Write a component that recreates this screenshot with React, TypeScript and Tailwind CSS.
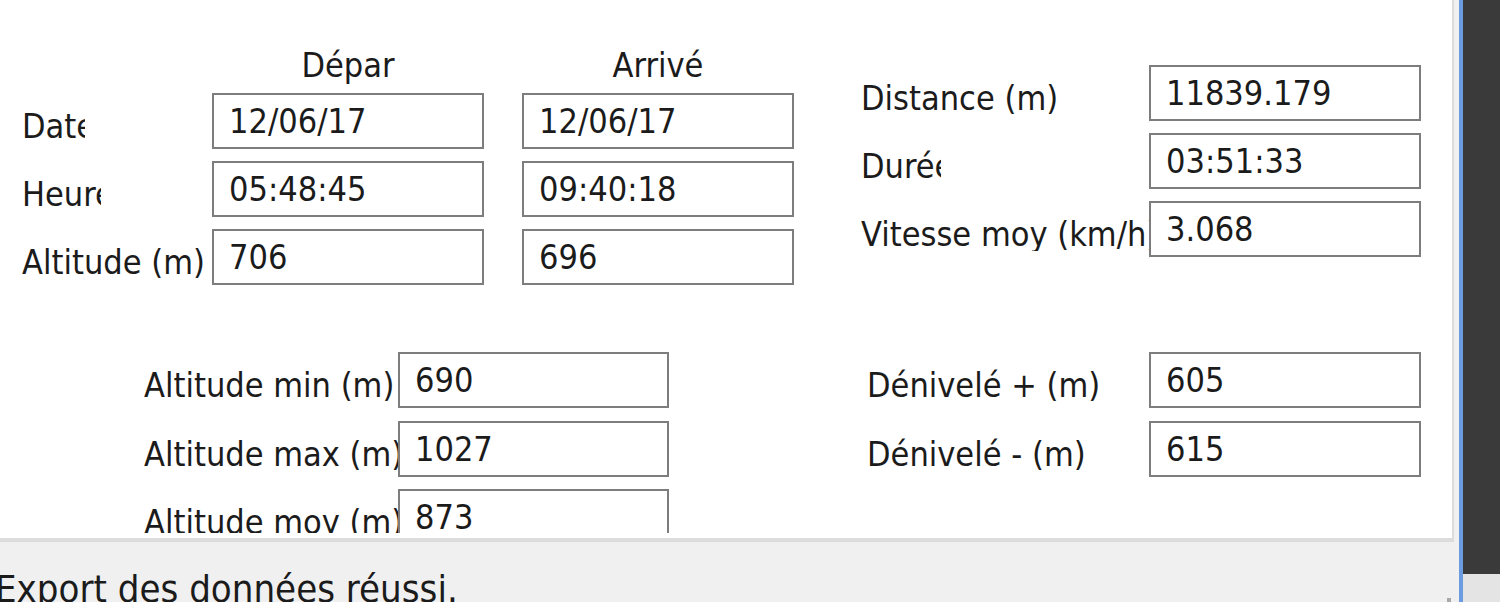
import * as React from 'react';

const FONT = 'font-["DejaVu_Sans_Condensed","DejaVu_Sans",sans-serif] [font-stretch:condensed]';

// Text box as drawn by the WinForms TextBox
function Box({ value, w = 'w-[272px]' }: { value: string; w?: string }) {
  return (
    <div className={`${w} h-[56px] shrink-0 flex items-center border-[2.5px] border-[#7d7d7d] bg-white pl-[15px] text-[#1b1b1b]`}>
      <span className="leading-none whitespace-nowrap">{value}</span>
    </div>
  );
}

function Label({ text, w }: { text: string; w: string }) {
  return (
    <div className={`${w} shrink-0 overflow-hidden whitespace-nowrap pt-[10px] leading-none text-[#1b1b1b]`}>
      {text}
    </div>
  );
}

export default function App() {
  return (
    <div className={`${FONT} text-[34px] w-[1500px] h-[602px] overflow-hidden flex bg-[#f0f0f0]`}>
      {/* Window body */}
      <div className="w-[1459px] shrink-0 flex flex-col">
        <div className="w-[1454px] h-[542px] shrink-0 border-r-2 border-b-4 border-[#dcdcdc]">
          <div className="w-[1452px] h-[538px] bg-white pb-[4px]">
            <div className="h-[533px] overflow-hidden">
              {/* Top section */}
              <div className="flex items-start">
                {/* Départ / Arrivée grid */}
                <div className="pl-[22px] pt-[48px]">
                  <div className="flex h-[34px] mb-[11px] leading-none text-[#1b1b1b]">
                    <div className="w-[190px]" />
                    <div className="w-[272px] flex justify-center">Dépar</div>
                    <div className="w-[38px]" />
                    <div className="w-[272px] flex justify-center">Arrivé</div>
                  </div>
                  <div className="flex flex-col gap-[12px]">
                    <div className="flex items-center">
                      <Label text="Date" w="w-[63px] mr-[127px]" />
                      <Box value="12/06/17" />
                      <div className="w-[38px]" />
                      <Box value="12/06/17" />
                    </div>
                    <div className="flex items-center">
                      <Label text="Heure" w="w-[79px] mr-[111px]" />
                      <Box value="05:48:45" />
                      <div className="w-[38px]" />
                      <Box value="09:40:18" />
                    </div>
                    <div className="flex items-center">
                      <Label text="Altitude (m)" w="w-[190px]" />
                      <Box value="706" />
                      <div className="w-[38px]" />
                      <Box value="696" />
                    </div>
                  </div>
                </div>

                {/* Distance / durée / vitesse */}
                <div className="ml-[67px] pt-[65px] flex flex-col gap-[12px]">
                  <div className="flex items-center">
                    <Label text="Distance (m)" w="w-[288px]" />
                    <Box value="11839.179" />
                  </div>
                  <div className="flex items-center">
                    <Label text="Durée" w="w-[80px] mr-[208px]" />
                    <Box value="03:51:33" />
                  </div>
                  <div className="flex items-center">
                    <Label text="Vitesse moy (km/h)" w="w-[288px]" />
                    <Box value="3.068" />
                  </div>
                </div>
              </div>

              {/* Bottom section */}
              <div className="flex items-start mt-[67px]">
                <div className="pl-[144px] flex flex-col">
                  <div className="flex items-center">
                    <Label text="Altitude min (m)" w="w-[254px]" />
                    <Box value="690" w="w-[271px]" />
                  </div>
                  <div className="flex items-center mt-[13px]">
                    <Label text="Altitude max (m)" w="w-[254px]" />
                    <Box value="1027" w="w-[271px]" />
                  </div>
                  <div className="flex items-center mt-[12px]">
                    <Label text="Altitude moy (m)" w="w-[254px]" />
                    <Box value="873" w="w-[271px]" />
                  </div>
                </div>
                <div className="ml-[198px] flex flex-col">
                  <div className="flex items-center">
                    <Label text="Dénivelé + (m)" w="w-[282px]" />
                    <Box value="605" />
                  </div>
                  <div className="flex items-center mt-[13px]">
                    <Label text="Dénivelé - (m)" w="w-[282px]" />
                    <Box value="615" />
                  </div>
                </div>
              </div>
            </div>
          </div>
        </div>

        {/* Status bar */}
        <div className="relative flex-1 bg-[#f0f0f0]">
          <div className="ml-[-5px] mt-[28px] text-[38px] leading-none whitespace-nowrap text-[#1b1b1b]">
            Export des données réussi.
          </div>
          <div className="absolute right-[8px] bottom-[0px] grid grid-cols-2 gap-[2px]">
            <div />
            <div className="w-[4px] h-[4px] bg-[#a8a8a8]" />
            <div className="w-[4px] h-[4px] bg-[#a8a8a8]" />
            <div className="w-[4px] h-[4px] bg-[#a8a8a8]" />
          </div>
        </div>
      </div>

      {/* Window edge */}
      <div className="w-[4px] shrink-0 bg-[#6b9be0]" />

      {/* Desktop behind */}
      <div className="flex-1 flex flex-col">
        <div className="h-[574px] bg-[#3a3a3a]" />
        <div className="flex-1 bg-[#e4e4e4]" />
      </div>
    </div>
  );
}
